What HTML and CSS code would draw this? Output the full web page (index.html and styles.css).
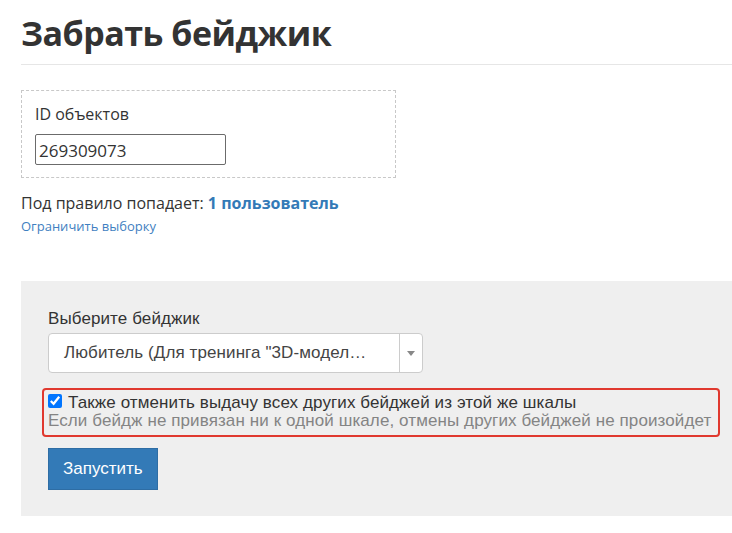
FILE: index.html
```html
<!DOCTYPE html>
<html lang="ru">
<head>
    <meta charset="UTF-8">
    <title>Забрать бейджик</title>
    <link rel="stylesheet" href="styles.css">
</head>
<body>
    <div class="page">
        <h1 class="page-title">Забрать бейджик</h1>

        <div class="filter-box">
            <label class="filter-label">ID объектов</label>
            <input class="filter-input" type="text" value="269309073">
        </div>

        <p class="rule-count">Под правило попадает: <a href="#" class="rule-link">1 пользователь</a></p>
        <a href="#" class="limit-link">Ограничить выборку</a>

        <div class="action-panel">
            <div class="field-label">Выберите бейджик</div>
            <div class="badge-select">
                <div class="badge-select-value">Любитель (Для тренинга "3D-моделирование")</div>
                <div class="badge-select-arrow"><span class="arrow-down"></span></div>
            </div>

            <div class="cancel-group">
                <label class="cancel-check">
                    <input type="checkbox" checked>
                    <span>Также отменить выдачу всех других бейджей из этой же шкалы</span>
                </label>
                <div class="cancel-help">Если бейдж не привязан ни к одной шкале, отмены других бейджей не произойдет</div>
            </div>

            <button class="run-button">Запустить</button>
        </div>
    </div>
</body>
</html>
```

FILE: styles.css
```css
* {
    box-sizing: border-box;
}

body {
    margin: 0;
    font-family: "Open Sans", "Noto Sans", sans-serif;
    color: #333333;
    background: #ffffff;
    overflow: hidden;
}

.page {
    padding-left: 21px;
}

.page-title {
    margin: 0;
    padding-top: 13px;
    padding-bottom: 11px;
    font-size: 34px;
    line-height: 40px;
    font-weight: 700;
    letter-spacing: -0.5px;
    color: #333333;
    border-bottom: 1px solid #e6e6e6;
}

.filter-box {
    width: 375px;
    margin-top: 25px;
    padding: 12px 14px 12px 13px;
    border: 1px dashed #c8c8c8;
}

.filter-label {
    display: block;
    font-size: 16px;
    line-height: 22px;
    margin-bottom: 9px;
}

.filter-input {
    display: block;
    width: 191px;
    height: 31px;
    padding: 1px 3px 0;
    font-family: "Open Sans", "Noto Sans", sans-serif;
    font-size: 17px;
    color: #333333;
    border: 1px solid #6b6b6b;
    border-radius: 2px;
    outline: none;
}

.rule-count {
    margin: 14px 0 0;
    font-size: 16px;
    line-height: 22px;
}

.rule-link {
    color: #337ab7;
    font-weight: 700;
    text-decoration: none;
}

.limit-link {
    display: block;
    margin-top: 3px;
    font-size: 13px;
    line-height: 18px;
    color: #3f7fc1;
    text-decoration: none;
}

.action-panel {
    margin-top: 46px;
    padding: 27px 12px 26px 27px;
    background: #efefef;
    font-family: "Liberation Sans", Arial, sans-serif;
    letter-spacing: 0.1px;
}

.field-label {
    font-size: 17px;
    line-height: 22px;
    margin-bottom: 3px;
}

.badge-select {
    display: flex;
    width: 375px;
    height: 40px;
    background: #ffffff;
    border: 1px solid #cccccc;
    border-radius: 4px;
}

.badge-select-value {
    flex: 1;
    min-width: 0;
    padding: 0 28px 0 15px;
    line-height: 38px;
    font-size: 17px;
    color: #444444;
    white-space: nowrap;
    overflow: hidden;
    text-overflow: ellipsis;
}

.badge-select-arrow {
    width: 23px;
    border-left: 1px solid #cccccc;
    display: flex;
    align-items: center;
    justify-content: center;
}

.arrow-down {
    width: 0;
    height: 0;
    border-left: 4px solid transparent;
    border-right: 4px solid transparent;
    border-top: 5px solid #888888;
}

.cancel-group {
    margin: 15px 0 11px -6px;
    padding: 4px 4px 5px 4px;
    border: 2px solid #e0392f;
    border-radius: 4px;
}

.cancel-check {
    display: flex;
    align-items: flex-start;
    font-size: 17px;
    line-height: 18px;
}

.cancel-check input {
    width: 14px;
    height: 14px;
    margin: 0 6px 0 0;
}

.cancel-help {
    font-size: 17px;
    line-height: 18px;
    color: #848484;
    white-space: nowrap;
}

.run-button {
    display: block;
    height: 42px;
    padding: 0 14px;
    font-family: "Liberation Sans", Arial, sans-serif;
    font-size: 17px;
    color: #ffffff;
    background: #337ab7;
    border: 1px solid #2e6da4;
    border-radius: 0;
}
```
